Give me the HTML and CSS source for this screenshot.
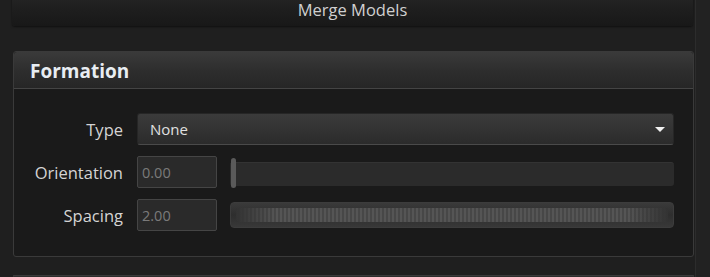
FILE: index.html
```html
<!DOCTYPE html>
<html lang="en">
<head>
    <meta charset="UTF-8">
    <title>Merge Models</title>
    <link rel="stylesheet" href="styles.css">
</head>
<body>
    <div class="page">
        <div class="content">
            <button class="merge">Merge Models</button>

            <section class="panel">
                <div class="panel-header">Formation</div>
                <div class="panel-body">
                    <label class="label">Type</label>
                    <div class="select">
                        <span>None</span>
                        <span class="arrow"></span>
                    </div>

                    <label class="label">Orientation</label>
                    <div class="field">
                        <input class="number" type="text" value="0.00">
                        <div class="slider">
                            <div class="handle"></div>
                        </div>
                    </div>

                    <label class="label">Spacing</label>
                    <div class="field">
                        <input class="number" type="text" value="2.00">
                        <div class="slider ribbed">
                            <div class="ribs"></div>
                        </div>
                    </div>
                </div>
            </section>

            <section class="panel next"></section>
        </div>
        <div class="scrollbar"></div>
    </div>
</body>
</html>
```

FILE: styles.css
```css
* {
    box-sizing: border-box;
}

body {
    margin: 0;
    height: 277px;
    overflow: hidden;
    background-color: #1f1f1f;
    font-family: "Open Sans", "Noto Sans", sans-serif;
    color: #d4d4d4;
}

.page {
    display: flex;
    height: 277px;
    overflow: hidden;
}

.content {
    width: 696px;
    padding-left: 12px;
    background-color: #1f1f1f;
    border-right: 1px solid #2c2c2c;
}

.scrollbar {
    flex: 1;
    background-color: #222;
}

.merge {
    display: block;
    width: 681px;
    height: 34px;
    margin-top: -8px;
    padding: 0;
    border: none;
    border-radius: 3px;
    background: linear-gradient(#262626, #1d1d1d 60%, #181818);
    box-shadow: 0 1px 2px rgba(0, 0, 0, 0.5);
    color: #d0d0d0;
    font-family: "Open Sans", "Noto Sans", sans-serif;
    font-size: 16.5px;
    line-height: 20px;
    padding-top: 2px;
}

.panel {
    width: 681px;
    margin-top: 25px;
    margin-left: 1px;
    border: 1px solid #3a3a3a;
    border-radius: 3px;
    background-color: #1a1a1a;
}

.panel-header {
    height: 37px;
    padding-left: 16px;
    border-bottom: 1px solid #444;
    border-radius: 3px 3px 0 0;
    background: linear-gradient(#3a3a3a, #2e2e2e 50%, #262626);
    color: #e8edf2;
    font-size: 19px;
    font-weight: 700;
    line-height: 38px;
}

.panel-body {
    display: grid;
    grid-template-columns: 109px 1fr;
    grid-auto-rows: 32px;
    column-gap: 14px;
    row-gap: 11px;
    padding: 24px 19px 25px 0;
}

.label {
    align-self: center;
    text-align: right;
    font-size: 16.5px;
}

.select {
    display: flex;
    justify-content: space-between;
    align-items: center;
    padding: 0 8px 0 12px;
    border: 1px solid #262626;
    border-bottom-color: #4a4a4a;
    border-radius: 3px;
    background: linear-gradient(#3b3b3b, #333 50%, #2b2b2b);
    color: #e0e0e0;
    font-size: 15px;
}

.arrow {
    width: 0;
    height: 0;
    border-left: 5px solid transparent;
    border-right: 5px solid transparent;
    border-top: 5px solid #f0f0f0;
}

.field {
    display: flex;
    align-items: center;
    gap: 13px;
}

.number {
    width: 80px;
    height: 32px;
    padding: 0 4px;
    border: 1px solid #454545;
    border-radius: 2px;
    background-color: #2a2a2a;
    color: #7a7a7a;
    font-family: "Open Sans", "Noto Sans", sans-serif;
    font-size: 14.5px;
}

.slider {
    position: relative;
    flex: 1;
    height: 24px;
    margin-top: 3px;
    border-radius: 3px;
    border-top: 1px solid #333;
    background-color: #2b2b2b;
}

.handle {
    position: absolute;
    left: 1px;
    top: -5px;
    width: 5px;
    height: 30px;
    border-radius: 3px;
    background-color: #5a5a5a;
}

.ribbed {
    height: 26px;
    margin-top: 0;
    padding: 5px;
    border: 1px solid #3c3c3c;
    border-radius: 4px;
    background: linear-gradient(#3a3a3a, #2e2e2e 50%, #383838);
}

.ribs {
    height: 100%;
    border-radius: 2px;
    background:
        linear-gradient(90deg, #333 0, transparent 40px, transparent calc(100% - 40px), #333 100%),
        repeating-linear-gradient(90deg, #555 0, #555 2px, #474747 2px, #474747 4px);
}

.next {
    margin-top: 18px;
    height: 2px;
    border-bottom: none;
    background-color: #2e2e2e;
}
```
